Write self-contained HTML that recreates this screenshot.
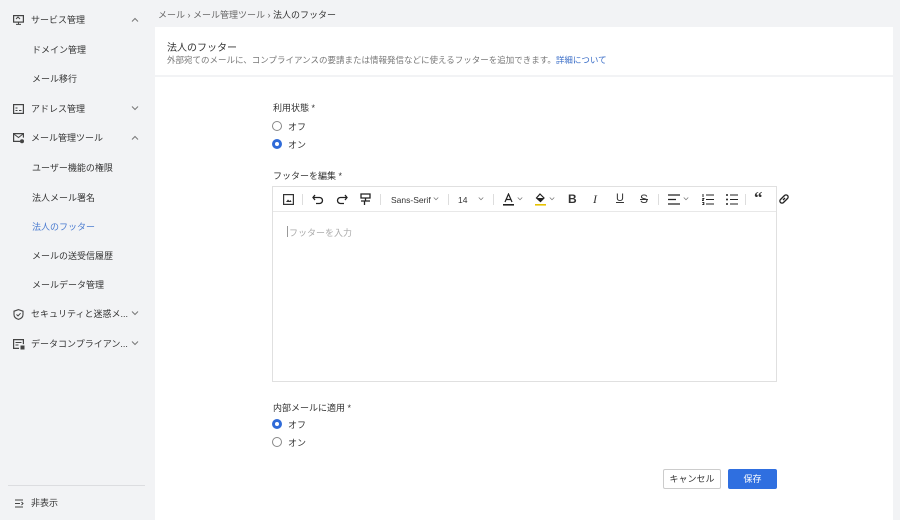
<!DOCTYPE html><html><head><meta charset="utf-8"><style>
*{margin:0;padding:0;box-sizing:border-box}
body{width:900px;height:520px;overflow:hidden;background:#f2f3f5;font-family:"Liberation Sans","Noto Sans CJK JP",sans-serif;color:#333;position:relative;font-size:9px}
.a{position:absolute}
.sb{left:0;top:0;width:153px;height:520px;background:#f2f3f5}
.it{position:absolute;left:0;width:153px;height:29px;line-height:29px;font-size:9px;color:#333}
.it .ic{position:absolute;left:13px;top:9px}
.it .t{position:absolute;left:31px}
.it.sub .t{left:32px}
.it .ch{position:absolute;left:131px;top:11px}
.rad{position:absolute;width:10px;height:10px;border:1px solid #888;border-radius:50%;background:#fff}
.rad.on{border:3px solid #2f6bd8}
.tb{position:absolute;top:6px}
.sep{position:absolute;top:7px;width:1px;height:11px;background:#ddd}
.dd{position:absolute;top:10px}
</style></head><body>
<svg width="0" height="0" style="position:absolute"><defs>
<symbol id="up" viewBox="0 0 8 5"><path d="M1 4.5L4 1.5L7 4.5" fill="none" stroke="#777" stroke-width="1"/></symbol>
<symbol id="dn" viewBox="0 0 8 5"><path d="M1 0.5L4 3.5L7 0.5" fill="none" stroke="#777" stroke-width="1"/></symbol>
</defs></svg>
<div class="a sb">
<div class="it" style="top:6px"><svg class="ic" width="11" height="10" viewBox="0 0 11 10"><rect x=".6" y=".6" width="9.8" height="6.5" fill="none" stroke="#444" stroke-width="1.2"/><path d="M3 9.4h5M5.5 7v2.4M3 4l2-2 2 2" fill="none" stroke="#444"/></svg><span class="t">サービス管理</span><svg class="ch" width="8" height="5"><use href="#up"/></svg></div>
<div class="it sub" style="top:36px"><span class="t">ドメイン管理</span></div>
<div class="it sub" style="top:65px"><span class="t">メール移行</span></div>
<div class="it" style="top:95px"><svg class="ic" width="11" height="10" viewBox="0 0 11 10"><rect x=".6" y=".6" width="9.8" height="8.8" fill="none" stroke="#444" stroke-width="1.2"/><path d="M2.5 4h2M2.5 6.5h2M6 6.5h2.5" stroke="#444"/></svg><span class="t">アドレス管理</span><svg class="ch" width="8" height="5"><use href="#dn"/></svg></div>
<div class="it" style="top:124px"><svg class="ic" width="12" height="11" viewBox="0 0 12 11"><path d="M7 8.4H.6V.6h9.8v4" fill="none" stroke="#444" stroke-width="1.2"/><path d="M.8 1l4.7 3.5L10 1" fill="none" stroke="#444"/><circle cx="9" cy="8.2" r="2" fill="#444"/></svg><span class="t">メール管理ツール</span><svg class="ch" width="8" height="5"><use href="#up"/></svg></div>
<div class="it sub" style="top:154px"><span class="t">ユーザー機能の権限</span></div>
<div class="it sub" style="top:184px"><span class="t">法人メール署名</span></div>
<div class="it sub" style="top:213px"><span class="t" style="color:#4a7bd0">法人のフッター</span></div>
<div class="it sub" style="top:242px"><span class="t">メールの送受信履歴</span></div>
<div class="it sub" style="top:271px"><span class="t">メールデータ管理</span></div>
<div class="it" style="top:300px"><svg class="ic" width="11" height="11" viewBox="0 0 11 11"><path d="M5.5.6L10 2.2v3.3c0 2.5-2 4.2-4.5 4.9C3 9.7 1 8 1 5.5V2.2z" fill="none" stroke="#444" stroke-width="1.1"/><path d="M3.5 5.5l1.5 1.4 2.6-2.7" fill="none" stroke="#444"/></svg><span class="t">セキュリティと迷惑メ...</span><svg class="ch" width="8" height="5"><use href="#dn"/></svg></div>
<div class="it" style="top:330px"><svg class="ic" width="12" height="11" viewBox="0 0 12 11"><path d="M6 9.4H.6V.6h9.8v4.5" fill="none" stroke="#444" stroke-width="1.2"/><path d="M2.5 3.5h6M2.5 6h3" stroke="#444"/><rect x="7.5" y="6.5" width="4" height="4" fill="#444"/></svg><span class="t">データコンプライアン...</span><svg class="ch" width="8" height="5"><use href="#dn"/></svg></div>
<div class="a" style="left:8px;top:485px;width:137px;height:1px;background:#dcdde0"></div>
<div class="it" style="top:489px"><svg class="ic" style="left:15px;top:10px" width="9" height="9" viewBox="0 0 9 9"><path d="M0 1h8M0 4.5h5M0 8h8M6.5 3l1.5 1.5-1.5 1.5" fill="none" stroke="#444"/></svg><span class="t">非表示</span></div>
</div>
<div class="a" style="left:158px;top:8px;font-size:9px;color:#666">メール › メール管理ツール › <span style="color:#333">法人のフッター</span></div>
<div class="a" style="left:155px;top:27px;width:738px;height:48px;background:#fff"></div>
<div class="a" style="left:167px;top:39px;font-size:10px;color:#333">法人のフッター</div>
<div class="a" style="left:167px;top:54px;font-size:8.5px;color:#777">外部宛てのメールに、コンプライアンスの要請または情報発信などに使えるフッターを追加できます。<span style="color:#3c6fc8">詳細について</span></div>
<div class="a" style="left:155px;top:77px;width:738px;height:443px;background:#fff"></div>
<div class="a" style="left:273px;top:101px;font-size:9px">利用状態 *</div>
<div class="rad" style="left:272px;top:121px"></div><div class="a" style="left:288px;top:120px">オフ</div>
<div class="rad on" style="left:272px;top:139px"></div><div class="a" style="left:288px;top:138px">オン</div>
<div class="a" style="left:273px;top:169px">フッターを編集 *</div>
<div class="a" style="left:272px;top:186px;width:505px;height:196px;border:1px solid #e0e0e0">
<div class="a" style="left:0;top:0;width:503px;height:25px;border-bottom:1px solid #e8e8e8"></div>
<svg class="tb" style="left:10px;top:7px" width="11" height="11" viewBox="0 0 11 11"><rect x=".6" y=".6" width="9.8" height="9.8" fill="none" stroke="#333" stroke-width="1.2"/><path d="M3 8l2-2.5 1.5 1.5 1-1L8.5 8z" fill="#333"/></svg>
<div class="sep" style="left:29px"></div>
<svg class="tb" style="left:39px;top:7px" width="12" height="11" viewBox="0 0 12 11"><path d="M3 1L1 3.5 3 6M1 3.5h6.5a3 3 0 010 6H4" fill="none" stroke="#222" stroke-width="1.3"/></svg>
<svg class="tb" style="left:63px;top:7px" width="12" height="11" viewBox="0 0 12 11"><path d="M9 1l2 2.5L9 6M11 3.5H4.5a3 3 0 000 6H8" fill="none" stroke="#222" stroke-width="1.3"/></svg>
<svg class="tb" style="left:87px;top:6px" width="11" height="13" viewBox="0 0 11 13"><path d="M1 1h9v4H1zM10 3h0.5M5.5 5v3M1 8h9v0M4.5 8v4" fill="none" stroke="#222" stroke-width="1.3"/></svg>
<div class="sep" style="left:107px"></div>
<div class="tb" style="left:118px;font-size:8.5px;top:8px">Sans-Serif</div><svg class="dd" style="left:160px" width="6" height="4"><use href="#dn"/></svg>
<div class="sep" style="left:175px"></div>
<div class="tb" style="left:185px;font-size:8.5px;top:8px">14</div><svg class="dd" style="left:205px" width="6" height="4"><use href="#dn"/></svg>
<div class="sep" style="left:220px"></div>
<svg class="tb" style="left:230px;top:6px" width="11" height="13" viewBox="0 0 11 13"><path d="M2 9l3.5-8L9 9M3.2 6.5h4.6" fill="none" stroke="#222" stroke-width="1.2"/><rect x="0" y="11" width="11" height="1.6" fill="#222"/></svg><svg class="dd" style="left:244px" width="6" height="4"><use href="#dn"/></svg>
<svg class="tb" style="left:262px;top:6px" width="11" height="13" viewBox="0 0 11 13"><path d="M5 1l4 4-3.5 3.5L1.5 5z" fill="none" stroke="#222" stroke-width="1.2"/><path d="M2 5h6.5L5.5 8z" fill="#222"/><rect x="0" y="11" width="11" height="1.6" fill="#e6c200"/></svg><svg class="dd" style="left:276px" width="6" height="4"><use href="#dn"/></svg>
<div class="tb" style="left:295px;font-weight:bold;font-size:12px;top:5px">B</div>
<div class="tb" style="left:320px;font-style:italic;font-size:12px;top:5px;font-family:'Liberation Serif',serif">I</div>
<div class="tb" style="left:343px;text-decoration:underline;font-size:11px;top:5px">U</div>
<div class="tb" style="left:367px;text-decoration:line-through;font-size:12px;top:5px">S</div>
<div class="sep" style="left:385px"></div>
<svg class="tb" style="left:395px;top:7px" width="12" height="11" viewBox="0 0 12 11"><path d="M0 1h12M0 5.5h8M0 10h12" stroke="#222" stroke-width="1.2"/></svg><svg class="dd" style="left:410px" width="6" height="4"><use href="#dn"/></svg>
<svg class="tb" style="left:429px;top:7px" width="12" height="11" viewBox="0 0 12 11"><path d="M4 1h8M4 5.5h8M4 10h8M1 0v3M.3 4.5h1.5l-1.5 2h1.5M.3 8.5h1.5v2H.3" fill="none" stroke="#222" stroke-width="1"/></svg>
<svg class="tb" style="left:453px;top:7px" width="12" height="11" viewBox="0 0 12 11"><path d="M4 1h8M4 5.5h8M4 10h8" stroke="#222" stroke-width="1.1"/><circle cx="1" cy="1" r="1" fill="#222"/><circle cx="1" cy="5.5" r="1" fill="#222"/><circle cx="1" cy="10" r="1" fill="#222"/></svg>
<div class="sep" style="left:472px"></div>
<div class="tb" style="left:481px;font-weight:bold;font-size:17px;top:1px;font-family:'Liberation Serif',serif">“</div>
<svg class="tb" style="left:505px;top:6px" width="12" height="12" viewBox="0 0 12 12"><path d="M5 7L7 5M4.5 4.5L6.5 2.5a2 2 0 013 3L7.5 7.5M4.5 4.5L2.5 6.5a2 2 0 003 3L7.5 7.5" fill="none" stroke="#222" stroke-width="1.3"/></svg>
<div class="a" style="left:14px;top:39px;width:1px;height:11px;background:#999"></div>
<div class="a" style="left:16px;top:39px;color:#aaa;font-size:9px">フッターを入力</div>
</div>
<div class="a" style="left:273px;top:401px">内部メールに適用 *</div>
<div class="rad on" style="left:272px;top:419px"></div><div class="a" style="left:288px;top:418px">オフ</div>
<div class="rad" style="left:272px;top:437px"></div><div class="a" style="left:288px;top:436px">オン</div>
<div class="a" style="left:663px;top:469px;width:58px;height:20px;border:1px solid #ccc;border-radius:2px;text-align:center;line-height:18px;font-size:9px;background:#fff">キャンセル</div>
<div class="a" style="left:728px;top:469px;width:49px;height:20px;background:#2f6fe0;border-radius:2px;text-align:center;line-height:20px;color:#fff;font-size:9px">保存</div>
</body></html>
